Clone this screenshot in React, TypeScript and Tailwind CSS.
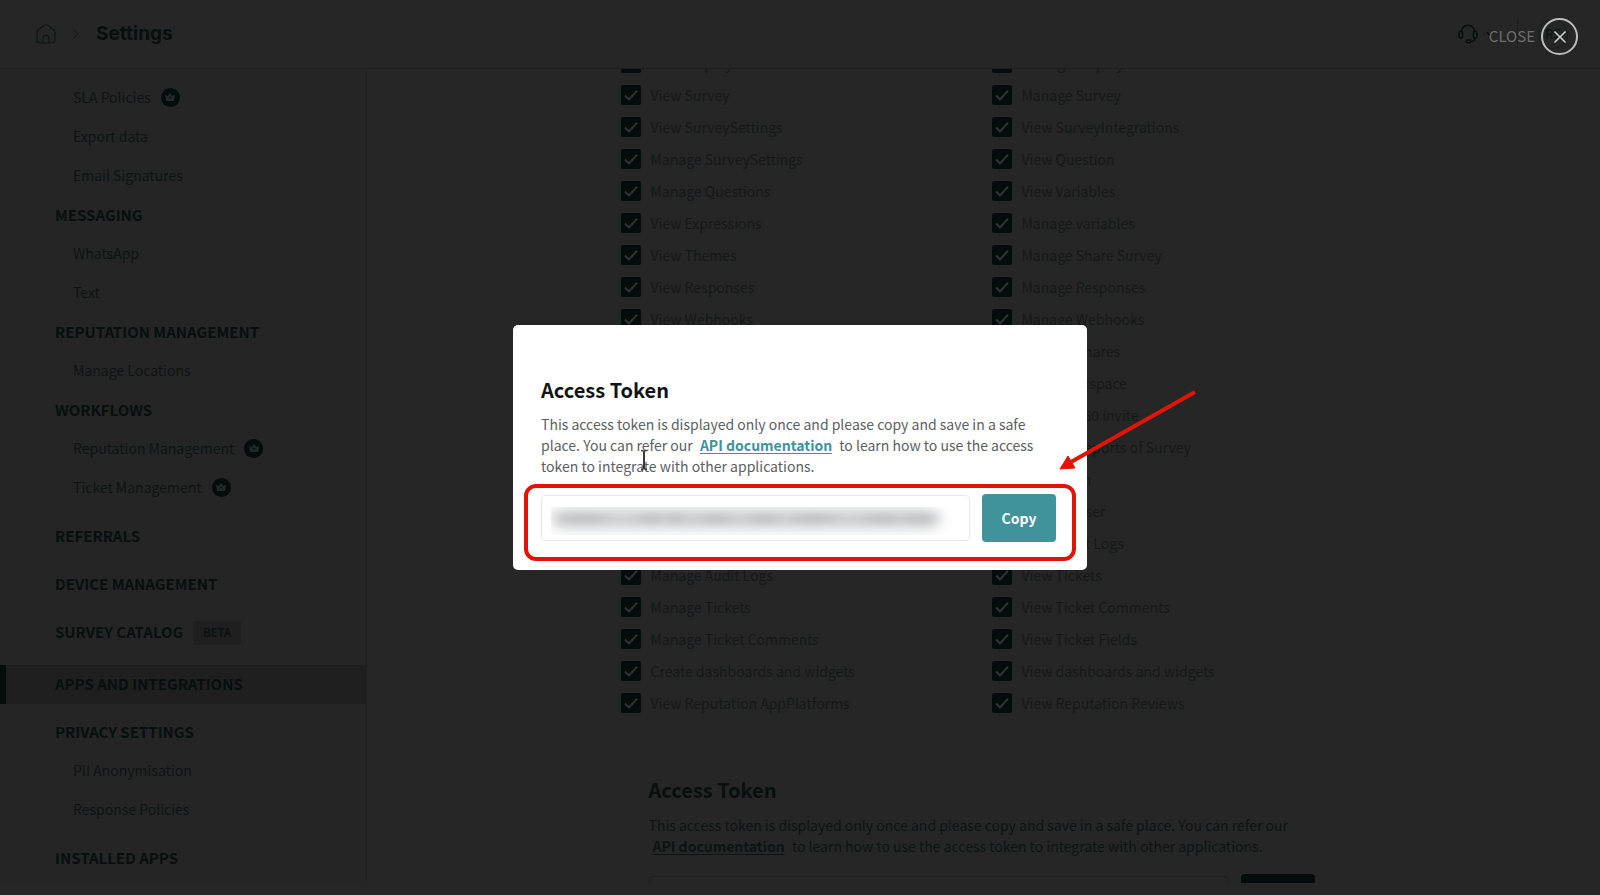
import { ChevronDown, ChevronRight, X } from "lucide-react";

type NavEntry = {
  label: string;
  kind: "item" | "heading";
  premium?: boolean;
  beta?: boolean;
  active?: boolean;
  spaced?: boolean;
};

const nav: NavEntry[] = [
  { label: "SLA Policies", kind: "item", premium: true },
  { label: "Export data", kind: "item" },
  { label: "Email Signatures", kind: "item" },
  { label: "MESSAGING", kind: "heading" },
  { label: "WhatsApp", kind: "item" },
  { label: "Text", kind: "item" },
  { label: "REPUTATION MANAGEMENT", kind: "heading" },
  { label: "Manage Locations", kind: "item" },
  { label: "WORKFLOWS", kind: "heading" },
  { label: "Reputation Management", kind: "item", premium: true },
  { label: "Ticket Management", kind: "item", premium: true },
  { label: "REFERRALS", kind: "heading", spaced: true },
  { label: "DEVICE MANAGEMENT", kind: "heading", spaced: true },
  { label: "SURVEY CATALOG", kind: "heading", spaced: true, beta: true },
  { label: "APPS AND INTEGRATIONS", kind: "heading", spaced: true, active: true },
  { label: "PRIVACY SETTINGS", kind: "heading", spaced: true },
  { label: "PII Anonymisation", kind: "item" },
  { label: "Response Policies", kind: "item" },
  { label: "INSTALLED APPS", kind: "heading", spaced: true },
];

const permissions: [string, string][] = [
  ["View Display", "Manage Display"],
  ["View Survey", "Manage Survey"],
  ["View SurveySettings", "View SurveyIntegrations"],
  ["Manage SurveySettings", "View Question"],
  ["Manage Questions", "View Variables"],
  ["View Expressions", "Manage variables"],
  ["View Themes", "Manage Share Survey"],
  ["View Responses", "Manage Responses"],
  ["View Webhooks", "Manage Webhooks"],
  ["View Shares", "Manage Shares"],
  ["Manage Contacts", "View Workspace"],
  ["View 360 invite", "Manage 360 invite"],
  ["View Reports", "Manage Reports of Survey"],
  ["Manage Roles", "View Team"],
  ["View User", "Manage User"],
  ["Manage Team", "View Audit Logs"],
  ["Manage Audit Logs", "View Tickets"],
  ["Manage Tickets", "View Ticket Comments"],
  ["Manage Ticket Comments", "View Ticket Fields"],
  ["Create dashboards and widgets", "View dashboards and widgets"],
  ["View Reputation AppPlatforms", "View Reputation Reviews"],
];

function HomeIcon() {
  return (
    <svg viewBox="0 0 20 20" className="size-5" fill="none" stroke="#0b1515" strokeWidth="1.1" aria-hidden="true">
      <path d="M1 8c0-.8.3-1.500.9-2L7.500 1.700c1.500-1.100 3.500-1.100 5 0L18.100 6c.6.500.9 1.200.9 2v8.500c0 1.400-1.100 2.500-2.500 2.500h-13C2.100 19 1 17.900 1 16.500z" />
      <path d="M7 19v-5c0-1.800 1.300-3 3-3s3 1.200 3 3v5" />
    </svg>
  );
}

function HeadsetIcon() {
  return (
    <svg viewBox="0 0 20 20" className="size-5" fill="none" stroke="#070e0e" strokeWidth="1.500" strokeLinecap="round" aria-hidden="true">
      <path d="M3.500 7.500C3.700 3.900 6.500 1.200 10 1.200s6.300 2.700 6.500 6.300" />
      <rect x="1" y="7.500" width="3.600" height="6.500" rx="1.400" />
      <rect x="15.400" y="7.500" width="3.600" height="6.500" rx="1.400" />
      <path d="M17 14c0 2-1.500 3.500-4.200 3.500" />
      <rect x="8.300" y="16" width="4.400" height="2.800" rx="1.400" />
    </svg>
  );
}

function Crown() {
  return (
    <span className="flex size-[19px] items-center justify-center rounded-full bg-[#040c0c]">
      <svg viewBox="0 0 12 12" className="size-3" aria-hidden="true">
        <path d="M1 3.500l2.600 1.800L6 1.800l2.400 3.500L11 3.500l-1 6.500H2z" fill="#232929" />
        <path d="M4.500 7.500L6 5.800l1.500 1.700" stroke="#040c0c" strokeWidth="0.9" fill="none" />
      </svg>
    </span>
  );
}

function NavRow({ entry }: { entry: NavEntry }) {
  const spacing = entry.active ? "mt-[13px]" : entry.spaced ? "mt-[9px]" : "";
  const tone = entry.active
    ? "border-l-[6px] border-[#040c0c] bg-[#1f1f1f] pl-[49px]"
    : entry.kind === "heading"
      ? "pl-[55px]"
      : "pb-[3px] pl-[73px]";
  const text = entry.kind === "heading" ? "text-[15px] font-bold text-[#080f0f]" : "text-sm text-[#0d1414]";
  return (
    <li className={spacing}>
      <a href="#" className={`flex h-[39px] items-center gap-[10px] ${tone} ${text}`}>
        {entry.label}
        {entry.premium && <Crown />}
        {entry.beta && (
          <span className="flex h-6 items-center rounded-[3px] bg-[#1f1f1f] px-[10px] text-[11px] font-bold text-[#0a1111]">
            BETA
          </span>
        )}
      </a>
    </li>
  );
}

function Permission({ label }: { label: string }) {
  return (
    <label className="flex h-8 items-center gap-[10px] text-sm text-[#151818]">
      <span className="relative size-5">
        <input type="checkbox" defaultChecked className="size-5 appearance-none rounded-[2px] bg-[#040c0c]" />
        <svg viewBox="0 0 20 20" className="pointer-events-none absolute inset-0 size-5" fill="none" stroke="#2e3333" strokeWidth="2" aria-hidden="true">
          <path d="M4 10.500l4 4L16 5.800" />
        </svg>
      </span>
      {label}
    </label>
  );
}

function BlurredToken() {
  const blobs = [
    [32, 48], [99, 26], [125, 20], [164, 34], [212, 34], [262, 46], [329, 36], [367, 36],
  ];
  return (
    <div className="pointer-events-none absolute inset-x-[10px] top-3 bottom-[6px] overflow-hidden">
      <svg viewBox="0 0 408 27" preserveAspectRatio="none" className="size-full" aria-hidden="true">
        <defs>
          <filter id="soft" x="-10%" y="-150%" width="120%" height="400%">
            <feGaussianBlur stdDeviation="7 6" />
          </filter>
          <filter id="softer" x="-60%" y="-200%" width="220%" height="500%">
            <feGaussianBlur stdDeviation="6 3" />
          </filter>
        </defs>
        <rect x="2" y="3" width="384" height="17" fill="#c8cacc" filter="url(#soft)" />
        {blobs.map(([cx, w]) => (
          <ellipse key={cx} cx={cx} cy="11" rx={w / 2} ry="5" fill="#b8babd" opacity="0.5" filter="url(#softer)" />
        ))}
      </svg>
    </div>
  );
}

export default function App() {
  return (
    <div className="relative flex h-screen flex-col overflow-hidden bg-[#262626] pb-3 font-['Noto_Sans_CJK_SC',sans-serif]">
      <header className="flex h-[69px] shrink-0 items-center border-b border-[#1e1e1e] pr-8 pl-9">
        <a href="#" aria-label="Home">
          <HomeIcon />
        </a>
        <ChevronRight className="mx-3 size-4 text-[#111717]" strokeWidth={1.5} />
        <h1 className="font-['Inter',sans-serif] text-[19px] font-bold text-[#070f0f]">Settings</h1>
        <div className="ml-auto flex items-center">
          <button type="button" aria-label="Support" className="flex items-center gap-[6px] text-[#070e0e]">
            <HeadsetIcon />
            <ChevronDown className="size-3" strokeWidth={3} />
          </button>
          <span className="ml-[21px] h-7 w-px bg-[#1e1e1e]" />
          <span className="ml-5 flex size-[30px] items-center justify-center rounded-full border border-[#181c1c] text-[13px] font-medium text-[#0f1515]">
            RS
          </span>
        </div>
      </header>

      <div className="flex min-h-0 flex-1">
        <nav aria-label="Settings" className="w-[367px] shrink-0 overflow-hidden border-r border-[#202020] bg-[#252525] pt-[10px]">
          <ul>
            {nav.map((entry) => (
              <NavRow key={entry.label} entry={entry} />
            ))}
          </ul>
        </nav>

        <main className="flex-1 overflow-hidden">
          <div className="mx-auto -mt-[22px] max-w-[726px]">
            <div className="grid grid-cols-[371px_1fr]">
              {permissions.flat().map((label) => (
                <Permission key={label} label={label} />
              ))}
            </div>
            <section className="pt-[56px] pr-8 pl-7">
              <h2 className="text-xl leading-[30px] font-bold text-[#070f0f]">Access Token</h2>
              <p className="mt-[10px] text-sm leading-[21px] text-[#0d1414]">
                This access token is displayed only once and please copy and save in a safe place. You can refer our{" "}
                <a href="#" className="mx-1 font-bold underline underline-offset-2">
                  API documentation
                </a>{" "}
                to learn how to use the access token to integrate with other applications.
              </p>
              <div className="mt-[17px] flex items-center gap-3">
                <input
                  aria-label="Saved access token"
                  readOnly
                  className="h-[45px] min-w-0 flex-1 rounded border border-[#1f1f1f] bg-transparent"
                />
                <button type="button" aria-label="Copy saved token" className="h-12 w-[74px] rounded bg-[#040c0c]" />
              </div>
            </section>
          </div>
        </main>
      </div>

      <div className="absolute inset-0 flex items-center justify-center">
        <div role="dialog" aria-labelledby="token-title" className="relative w-[574px] rounded-[5px] bg-white px-7 pt-[50px] pb-7">
          <h2 id="token-title" className="text-xl leading-[30px] font-bold text-[#0f1616]">
            Access Token
          </h2>
          <p className="mt-[9px] text-sm leading-[21px] text-[#5b6061]">
            This access token is displayed only once and please copy and save in a safe place. You can refer our{" "}
            <a href="#" className="mx-1 font-bold text-[#40929b] underline underline-offset-2">
              API documentation
            </a>{" "}
            to learn how to use the access token to integrate with other applications.
          </p>
          <div className="mt-[17px] flex items-center gap-3 pr-[3px]">
            <div className="relative min-w-0 flex-1">
              <input
                aria-label="Access token"
                readOnly
                className="block h-[46px] w-full rounded border border-[#e8e9ea] bg-white"
              />
              <BlurredToken />
            </div>
            <button type="button" className="h-12 w-[74px] rounded bg-[#40929b] text-sm font-bold text-white">
              Copy
            </button>
          </div>

          <div className="pointer-events-none absolute right-[11px] bottom-[9px] left-[11px] h-[77px] rounded-xl border-4 border-[#e01505]" />
          <svg viewBox="0 0 140 82" className="pointer-events-none absolute top-[64px] left-[546px] h-[82px] w-[140px]" aria-hidden="true">
            <path d="M136 3L12 73" stroke="#e01505" strokeWidth="4" />
            <path d="M1 80L9 67L16 79z" fill="#e01505" stroke="#e01505" />
          </svg>
          <svg viewBox="0 0 10 22" className="pointer-events-none absolute top-[124px] left-[126px] h-[22px] w-[10px]" fill="none" stroke="#3a3a3a" aria-hidden="true">
            <path d="M2 1.500c2 0 3 .5 3 2v15c0 1.500-1 2-3 2M8 1.500c-2 0-3 .5-3 2v15c0 1.500 1 2 3 2" strokeWidth="1.300" />
            <path d="M5 3v16" strokeWidth="2" />
          </svg>
        </div>
      </div>

      <button type="button" className="absolute top-[18px] right-[22px] flex items-center gap-[6px] text-[15px] text-[#6e6e6e]">
        CLOSE
        <span className="flex size-[37px] items-center justify-center rounded-full border-2 border-[#bcbcbc] text-[#cfcfcf]">
          <X className="size-5" strokeWidth={2} />
        </span>
      </button>
    </div>
  );
}
